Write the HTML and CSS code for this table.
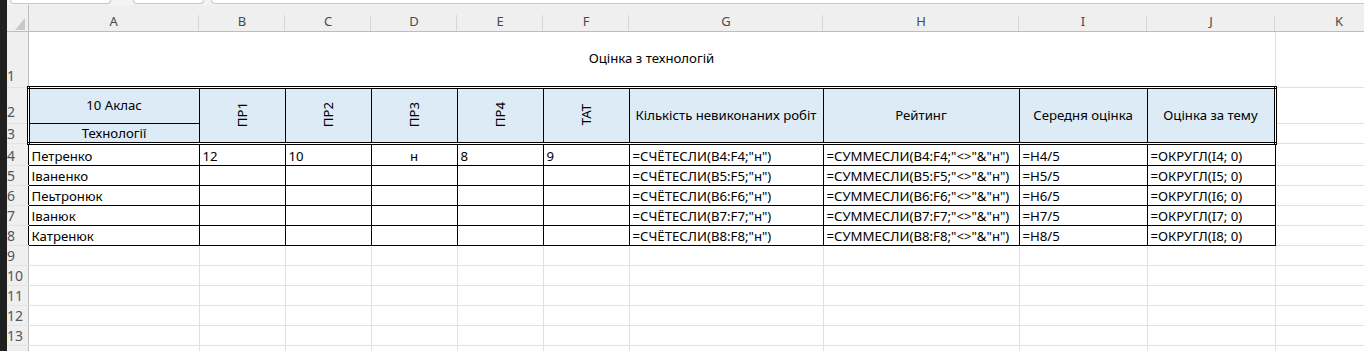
FILE: index.html
```html
<!DOCTYPE html>
<html lang="uk">
<head>
<meta charset="utf-8">
<title>Оцінка з технологій</title>
<link rel="stylesheet" href="styles.css">
</head>
<body>
<div class="app">
  <div class="strip"></div>
  <div class="main">
    <div class="topbar">
      <div class="box b1"></div>
      <div class="box b2"></div>
      <div class="box b3"></div>
    </div>
    <table class="sheet">
      <colgroup>
        <col class="c-rh"><col class="c-a"><col class="c-n"><col class="c-n"><col class="c-n"><col class="c-n"><col class="c-n"><col class="c-g"><col class="c-h"><col class="c-i"><col class="c-j"><col class="c-k">
      </colgroup>
      <thead>
        <tr class="r-ch">
          <th class="corner"><svg class="tri" width="10" height="12" viewBox="0 0 10 12"><polygon points="10,0 10,12 0,12" fill="#c9c9c9"/></svg></th>
          <th>A</th><th>B</th><th>C</th><th>D</th><th>E</th><th>F</th><th>G</th><th>H</th><th>I</th><th>J</th><th>K</th>
        </tr>
      </thead>
      <tbody>
        <tr class="r1">
          <td class="rh up">1</td>
          <td class="title" colspan="10">Оцінка з технологій</td>
          <td></td>
        </tr>
        <tr class="r2">
          <td class="rh up">2</td>
          <td class="hd first a2">10 Аклас</td>
          <td class="hd v" rowspan="2"><span>ПР1</span></td>
          <td class="hd v" rowspan="2"><span>ПР2</span></td>
          <td class="hd v" rowspan="2"><span>ПР3</span></td>
          <td class="hd v" rowspan="2"><span>ПР4</span></td>
          <td class="hd v" rowspan="2"><span>ТАТ</span></td>
          <td class="hd" rowspan="2">Кількість невиконаних робіт</td>
          <td class="hd" rowspan="2">Рейтинг</td>
          <td class="hd" rowspan="2">Середня оцінка</td>
          <td class="hd last" rowspan="2">Оцінка за тему</td>
          <td></td>
        </tr>
        <tr class="r3">
          <td class="rh">3</td>
          <td class="hd first a3">Технології</td>
          <td></td>
        </tr>
        <tr class="r4">
          <td class="rh rb">4</td>
          <td class="d">Петренко</td><td class="d">12</td><td class="d">10</td><td class="d c">н</td><td class="d">8</td><td class="d">9</td>
          <td class="d">=СЧЁТЕСЛИ(B4:F4;"н")</td><td class="d">=СУММЕСЛИ(B4:F4;"&lt;&gt;"&amp;"н")</td><td class="d">=H4/5</td><td class="d">=ОКРУГЛ(I4; 0)</td>
          <td></td>
        </tr>
        <tr>
          <td class="rh rb">5</td>
          <td class="d">Іваненко</td><td class="d"></td><td class="d"></td><td class="d"></td><td class="d"></td><td class="d"></td>
          <td class="d">=СЧЁТЕСЛИ(B5:F5;"н")</td><td class="d">=СУММЕСЛИ(B5:F5;"&lt;&gt;"&amp;"н")</td><td class="d">=H5/5</td><td class="d">=ОКРУГЛ(I5; 0)</td>
          <td></td>
        </tr>
        <tr>
          <td class="rh rb">6</td>
          <td class="d">Пеьтронюк</td><td class="d"></td><td class="d"></td><td class="d"></td><td class="d"></td><td class="d"></td>
          <td class="d">=СЧЁТЕСЛИ(B6:F6;"н")</td><td class="d">=СУММЕСЛИ(B6:F6;"&lt;&gt;"&amp;"н")</td><td class="d">=H6/5</td><td class="d">=ОКРУГЛ(I6; 0)</td>
          <td></td>
        </tr>
        <tr>
          <td class="rh rb">7</td>
          <td class="d">Іванюк</td><td class="d"></td><td class="d"></td><td class="d"></td><td class="d"></td><td class="d"></td>
          <td class="d">=СЧЁТЕСЛИ(B7:F7;"н")</td><td class="d">=СУММЕСЛИ(B7:F7;"&lt;&gt;"&amp;"н")</td><td class="d">=H7/5</td><td class="d">=ОКРУГЛ(I7; 0)</td>
          <td></td>
        </tr>
        <tr>
          <td class="rh rb">8</td>
          <td class="d">Катренюк</td><td class="d"></td><td class="d"></td><td class="d"></td><td class="d"></td><td class="d"></td>
          <td class="d">=СЧЁТЕСЛИ(B8:F8;"н")</td><td class="d">=СУММЕСЛИ(B8:F8;"&lt;&gt;"&amp;"н")</td><td class="d">=H8/5</td><td class="d">=ОКРУГЛ(I8; 0)</td>
          <td></td>
        </tr>
        <tr><td class="rh">9</td><td></td><td></td><td></td><td></td><td></td><td></td><td></td><td></td><td></td><td></td><td></td></tr>
        <tr><td class="rh">10</td><td></td><td></td><td></td><td></td><td></td><td></td><td></td><td></td><td></td><td></td><td></td></tr>
        <tr><td class="rh">11</td><td></td><td></td><td></td><td></td><td></td><td></td><td></td><td></td><td></td><td></td><td></td></tr>
        <tr><td class="rh">12</td><td></td><td></td><td></td><td></td><td></td><td></td><td></td><td></td><td></td><td></td><td></td></tr>
        <tr><td class="rh">13</td><td></td><td></td><td></td><td></td><td></td><td></td><td></td><td></td><td></td><td></td><td></td></tr>
        <tr><td class="rh"></td><td></td><td></td><td></td><td></td><td></td><td></td><td></td><td></td><td></td><td></td><td></td></tr>
      </tbody>
    </table>
  </div>
</div>
</body>
</html>
```

FILE: styles.css
```css
html, body {
  margin: 0;
  padding: 0;
  background: #ffffff;
  overflow: hidden;
  height: 351px;
}
.app {
  display: flex;
  height: 351px;
  width: 1364px;
  overflow: hidden;
}
.strip {
  flex: 0 0 7px;
  background: #202020;
}
.main {
  flex: 1 1 auto;
  min-width: 0;
  overflow: hidden;
  background: #ffffff;
}
.topbar {
  height: 5px;
  background: #f3f3f3;
  display: flex;
  align-items: flex-start;
}
.box {
  height: 4px;
  box-sizing: border-box;
  background: #ffffff;
  border: 1px solid #c6c6c6;
  border-top: none;
  border-radius: 0 0 5px 5px;
}
.b1 { margin-left: 3px; width: 101px; }
.b2 { margin-left: 22px; width: 71px; }
.b3 { margin-left: 7px; flex: 1 1 auto; border-right: none; border-radius: 0 0 0 5px; }

.sheet {
  border-collapse: collapse;
  table-layout: fixed;
  width: 1396px;
  font-family: "Noto Sans", "Liberation Sans", sans-serif;
  font-size: 13.2px;
  color: #000;
}
.c-rh { width: 21px; }
.c-a { width: 171px; }
.c-n { width: 86px; }
.c-g { width: 194px; }
.c-h { width: 196px; }
.c-i { width: 128px; }
.c-j { width: 128px; }
.c-k { width: 128px; }

.sheet td, .sheet th {
  padding: 0 3px;
  border-top: none;
  border-left: none;
  border-right: 1px solid #e1e1e1;
  border-bottom: 1px solid #e1e1e1;
  white-space: nowrap;
  overflow: hidden;
  vertical-align: bottom;
  text-align: left;
  line-height: 17px;
}

.r-ch { height: 26px; }
.r-ch th {
  background: #efefef linear-gradient(#d6d6d6, #d6d6d6) no-repeat right bottom / 1px 16px;
  border-right: none;
  border-bottom: 1px solid #bdbdbd;
  font-weight: normal;
  color: #4a4a4a;
  text-align: center;
  vertical-align: bottom;
  padding-bottom: 1px;
  font-size: 13px;
}
.r-ch th.corner {
  padding: 0 0 1px 0;
  vertical-align: bottom;
  text-align: right;
  border-right: 1px solid #bdbdbd;
  background: #efefef;
}
.tri { display: block; margin-left: 8px; }

.rh {
  background: #efefef;
  color: #555;
  text-align: center;
  font-size: 14px;
  padding: 0 7px 1px 0 !important;
  border-right: 1px solid #bdbdbd !important;
  border-bottom: 1px solid #e3e3e3 !important;
}
.rh.up { padding-bottom: 3px !important; }
.rh.rb { border-right: 1px solid #000 !important; }

.r1 { height: 56px; }
.r2 { height: 36px; }
.r3 { height: 20px; }
.r4 { height: 22px; }
tbody tr { height: 20px; }

.title {
  text-align: center !important;
  vertical-align: middle !important;
}

.sheet td.hd {
  background: #ddebf7;
  border: 1px solid #000;
  border-top: 3px double #000;
  border-bottom: 3px double #000;
  text-align: center;
  vertical-align: middle;
}
.sheet td.hd.first { border-left: 3px double #000; }
.sheet td.hd.last { border-right: 3px double #000; }
.sheet td.hd.a2 { border-bottom: 1px solid #000; }
.sheet td.hd.a3 { border-top: 1px solid #000; vertical-align: bottom; }
.v span {
  display: inline-block;
  writing-mode: vertical-rl;
  transform: rotate(180deg);
  line-height: 16px;
  margin-top: 4px;
}

.sheet td.d {
  border: 1px solid #000;
}
.sheet td.c { text-align: center; }
```
